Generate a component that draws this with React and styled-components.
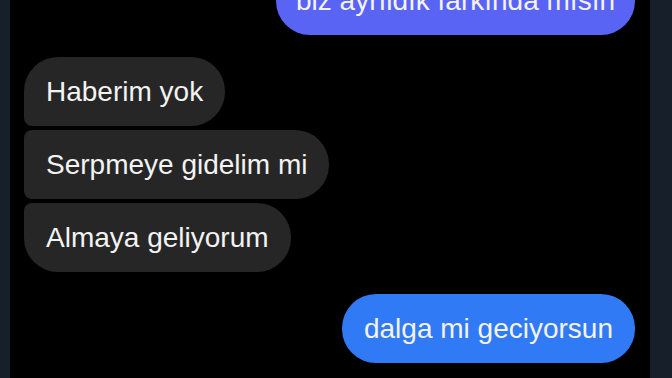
import React from 'react'
import styled, { createGlobalStyle } from 'styled-components'

const GlobalStyle = createGlobalStyle`
  html, body {
    margin: 0;
    padding: 0;
    background: #000;
    overflow: hidden;
  }
`

const Screen = styled.div`
  width: 672px;
  height: 378px;
  display: flex;
  background: #000;
  overflow: hidden;
  font-family: "Liberation Sans", Arial, sans-serif;
`

const Edge = styled.div`
  width: ${props => props.w}px;
  flex-shrink: 0;
  background: #17202a;
`

const Thread = styled.div`
  flex: 1;
  display: flex;
  flex-direction: column;
  padding: 0 15px 0 14px;
  margin-top: -34px;
`

const Group = styled.div`
  display: flex;
  flex-direction: column;
  align-items: ${props => props.mine ? 'flex-end' : 'flex-start'};
  gap: 4px;
  margin-bottom: 22px;
`

const radii = {
  single: '34px',
  first: '34px 34px 34px 8px',
  middle: '8px 34px 34px 8px',
  last: '8px 34px 34px 34px'
}

const Bubble = styled.div`
  height: 69px;
  box-sizing: border-box;
  display: flex;
  align-items: center;
  padding: 0 ${props => props.pad || 22}px;
  border-radius: ${props => radii[props.shape || 'single']};
  background: ${props => props.bg};
  color: #f3f3f3;
  font-size: 28px;
  white-space: nowrap;
`

const theirs = ['Haberim yok', 'Serpmeye gidelim mi', 'Almaya geliyorum']
const shapes = ['first', 'middle', 'last']

const App = () =>
  <Screen>
    <GlobalStyle />
    <Edge w={10} />
    <Thread>
      {/* sent, cut off at top */}
      <Group mine>
        <Bubble bg="#5a64f4" pad={20}>biz ayrıldık farkında mısın</Bubble>
      </Group>
      {/* received */}
      <Group>
        {theirs.map((text, index) => (
          <Bubble key={index} shape={shapes[index]} bg="#262626">{text}</Bubble>
        ))}
      </Group>
      <Group mine>
        <Bubble bg="#307af5">dalga mi geciyorsun</Bubble>
      </Group>
    </Thread>
    <Edge w={22} />
  </Screen>

export default App
